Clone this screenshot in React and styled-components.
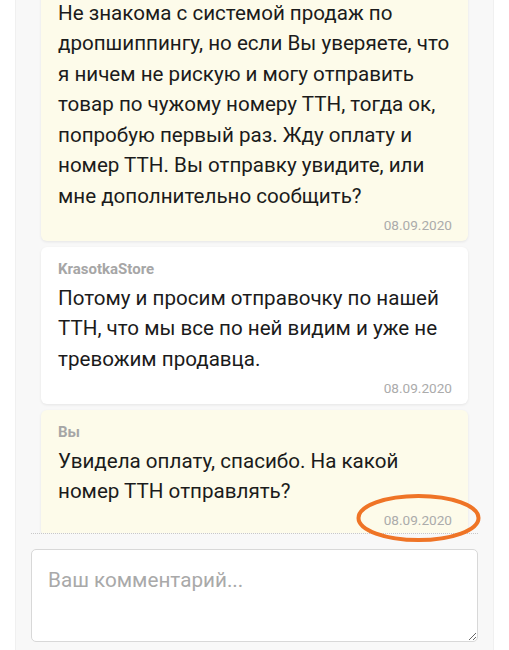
import styled, { createGlobalStyle } from 'styled-components';

const GlobalStyle = createGlobalStyle`
  html, body {
    margin: 0;
    padding: 0;
    background: #fff;
    font-family: Roboto, "Liberation Sans", Arial, sans-serif;
  }
`

const Page = styled.div`
  position: relative;
  width: 509px;
  height: 650px;
  overflow: hidden;
  background: #fff;
`
const Panel = styled.div`
  margin: 0 15px;
  height: 650px;
  box-sizing: border-box;
  padding: 0 15px;
  background: #f8f8f8;
  border-left: 1px solid #f0f0f0;
  border-right: 1px solid #f0f0f0;
  display: flex;
  flex-direction: column;
`
const Feed = styled.div`
  height: 533px;
  overflow: hidden;
  display: flex;
  flex-direction: column;
  justify-content: flex-end;
  border-bottom: 1px dotted #c8c8c8;
`
const FeedList = styled.div`
  display: flex;
  flex-direction: column;
  gap: 6px;
  margin: 0 10px -3px 10px;
`
const Card = styled.div`
  background: ${p => (p.$mine ? '#fdfbea' : '#ffffff')};
  border-radius: 6px;
  box-shadow: 0 1px 3px rgba(0, 0, 0, 0.08);
  padding: 12px 16px 8px 17px;
`
const Author = styled.div`
  font-size: 15px;
  line-height: 20px;
  font-weight: 700;
  color: #a6a6a6;
  margin-bottom: 4px;
`
const Text = styled.div`
  font-size: 20.6px;
  line-height: 30.5px;
  color: #1b1b1b;
`
const Date = styled.div`
  margin-top: 5.5px;
  font-size: 13.6px;
  line-height: 16px;
  color: #ababab;
  text-align: right;
`
const Comment = styled.textarea`
  display: block;
  margin-top: 15px;
  width: 100%;
  height: 93px;
  box-sizing: border-box;
  padding: 15px 16px;
  border: 1px solid #d8d8d8;
  border-radius: 5px;
  background: #fff;
  font-family: Roboto, "Liberation Sans", Arial, sans-serif;
  font-size: 20.7px;
  line-height: 30px;
  color: #222;
  outline: none;

  &::placeholder {
    color: #a9a9a9;
  }
`
const Mark = styled.svg`
  position: absolute;
  left: 355px;
  top: 492px;
  pointer-events: none;
`

const messages = [
  {
    mine: true,
    author: 'Вы',
    text: 'Не знакома с системой продаж по дропшиппингу, но если Вы уверяете, что я ничем не рискую и могу отправить товар по чужому номеру ТТН, тогда ок, попробую первый раз. Жду оплату и номер ТТН. Вы отправку увидите, или мне дополнительно сообщить?',
    date: '08.09.2020',
  },
  {
    mine: false,
    author: 'KrasotkaStore',
    text: 'Потому и просим отправочку по нашей ТТН, что мы все по ней видим и уже не тревожим продавца.',
    date: '08.09.2020',
  },
  {
    mine: true,
    author: 'Вы',
    text: 'Увидела оплату, спасибо. На какой номер ТТН отправлять?',
    date: '08.09.2020',
  },
]

const App = () => {
  return (
    <Page>
      <GlobalStyle />
      <Panel>
        <Feed>
          <FeedList>
            {messages.map((m, i) => (
              <Card key={i} $mine={m.mine}>
                <Author>{m.author}</Author>
                <Text>{m.text}</Text>
                <Date>{m.date}</Date>
              </Card>
            ))}
          </FeedList>
        </Feed>
        <Comment placeholder="Ваш комментарий..." />
      </Panel>
      <Mark width="130" height="54" viewBox="0 0 130 54">
        <ellipse cx="63.5" cy="26" rx="60" ry="22" fill="none" stroke="#ef7426" strokeWidth="4" />
      </Mark>
    </Page>
  )
}

export default App
